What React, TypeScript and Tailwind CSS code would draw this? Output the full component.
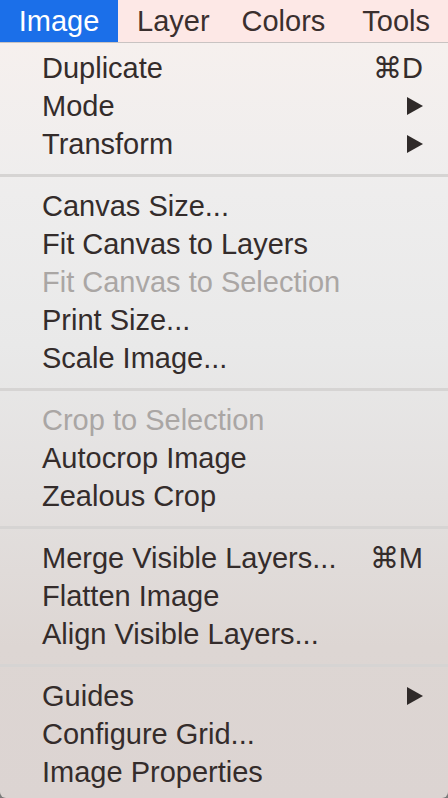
import React from "react";

type Item = { label: string; disabled?: boolean; shortcut?: string; submenu?: boolean };

const sections: Item[][] = [
  [
    { label: "Duplicate", shortcut: "⌘D" },
    { label: "Mode", submenu: true },
    { label: "Transform", submenu: true },
  ],
  [
    { label: "Canvas Size..." },
    { label: "Fit Canvas to Layers" },
    { label: "Fit Canvas to Selection", disabled: true },
    { label: "Print Size..." },
    { label: "Scale Image..." },
  ],
  [
    { label: "Crop to Selection", disabled: true },
    { label: "Autocrop Image" },
    { label: "Zealous Crop" },
  ],
  [
    { label: "Merge Visible Layers...", shortcut: "⌘M" },
    { label: "Flatten Image" },
    { label: "Align Visible Layers..." },
  ],
  [
    { label: "Guides", submenu: true },
    { label: "Configure Grid..." },
    { label: "Image Properties" },
  ],
];

function Arrow() {
  return (
    <svg width="16" height="18" viewBox="0 0 16 18" className="block">
      <polygon points="0,0 16,9 0,18" fill="#2f2a29" />
    </svg>
  );
}

function Row({ item }: { item: Item }) {
  return (
    <div className="flex h-[38px] items-center justify-between pl-[42px] pr-[25px]">
      <span className={item.disabled ? "text-[#aaa6a4]" : "text-[#342c2b]"}>{item.label}</span>
      {item.shortcut && <span className="text-[#342c2b]">{item.shortcut}</span>}
      {item.submenu && <Arrow />}
    </div>
  );
}

export default function App() {
  return (
    <div
      className="flex h-[798px] w-[448px] flex-col overflow-hidden bg-[#7a7a7a] text-[29px] leading-none"
      style={{ fontFamily: '"Liberation Sans", Arial, sans-serif' }}
    >
      <div className="flex h-[43px] shrink-0 items-stretch border-b border-[#c9c3c2] bg-[#fde8e6]">
        <div className="flex w-[118px] items-center justify-center bg-[#1b6fe9] text-white">Image</div>
        <div className="flex items-center pl-[19px] text-[#3a2f2e]">Layer</div>
        <div className="flex items-center pl-[32px] text-[#3a2f2e]">Colors</div>
        <div className="flex items-center pl-[37px] text-[#3a2f2e]">Tools</div>
      </div>
      <div className="flex flex-1 flex-col rounded-b-[6px] bg-[linear-gradient(180deg,#f6f0ee_0%,#eeeded_20%,#e9e9e9_40%,#e3e0df_60%,#ddd6d3_80%,#dcd4d2_100%)] pt-[6px]">
        {sections.map((sec, i) => (
          <div key={i} className="flex flex-col">
            {i > 0 && <div className="mb-[10px] mt-[11px] h-[3px] bg-[#d6d4d3]" />}
            {sec.map((it) => (
              <Row key={it.label} item={it} />
            ))}
          </div>
        ))}
      </div>
    </div>
  );
}
